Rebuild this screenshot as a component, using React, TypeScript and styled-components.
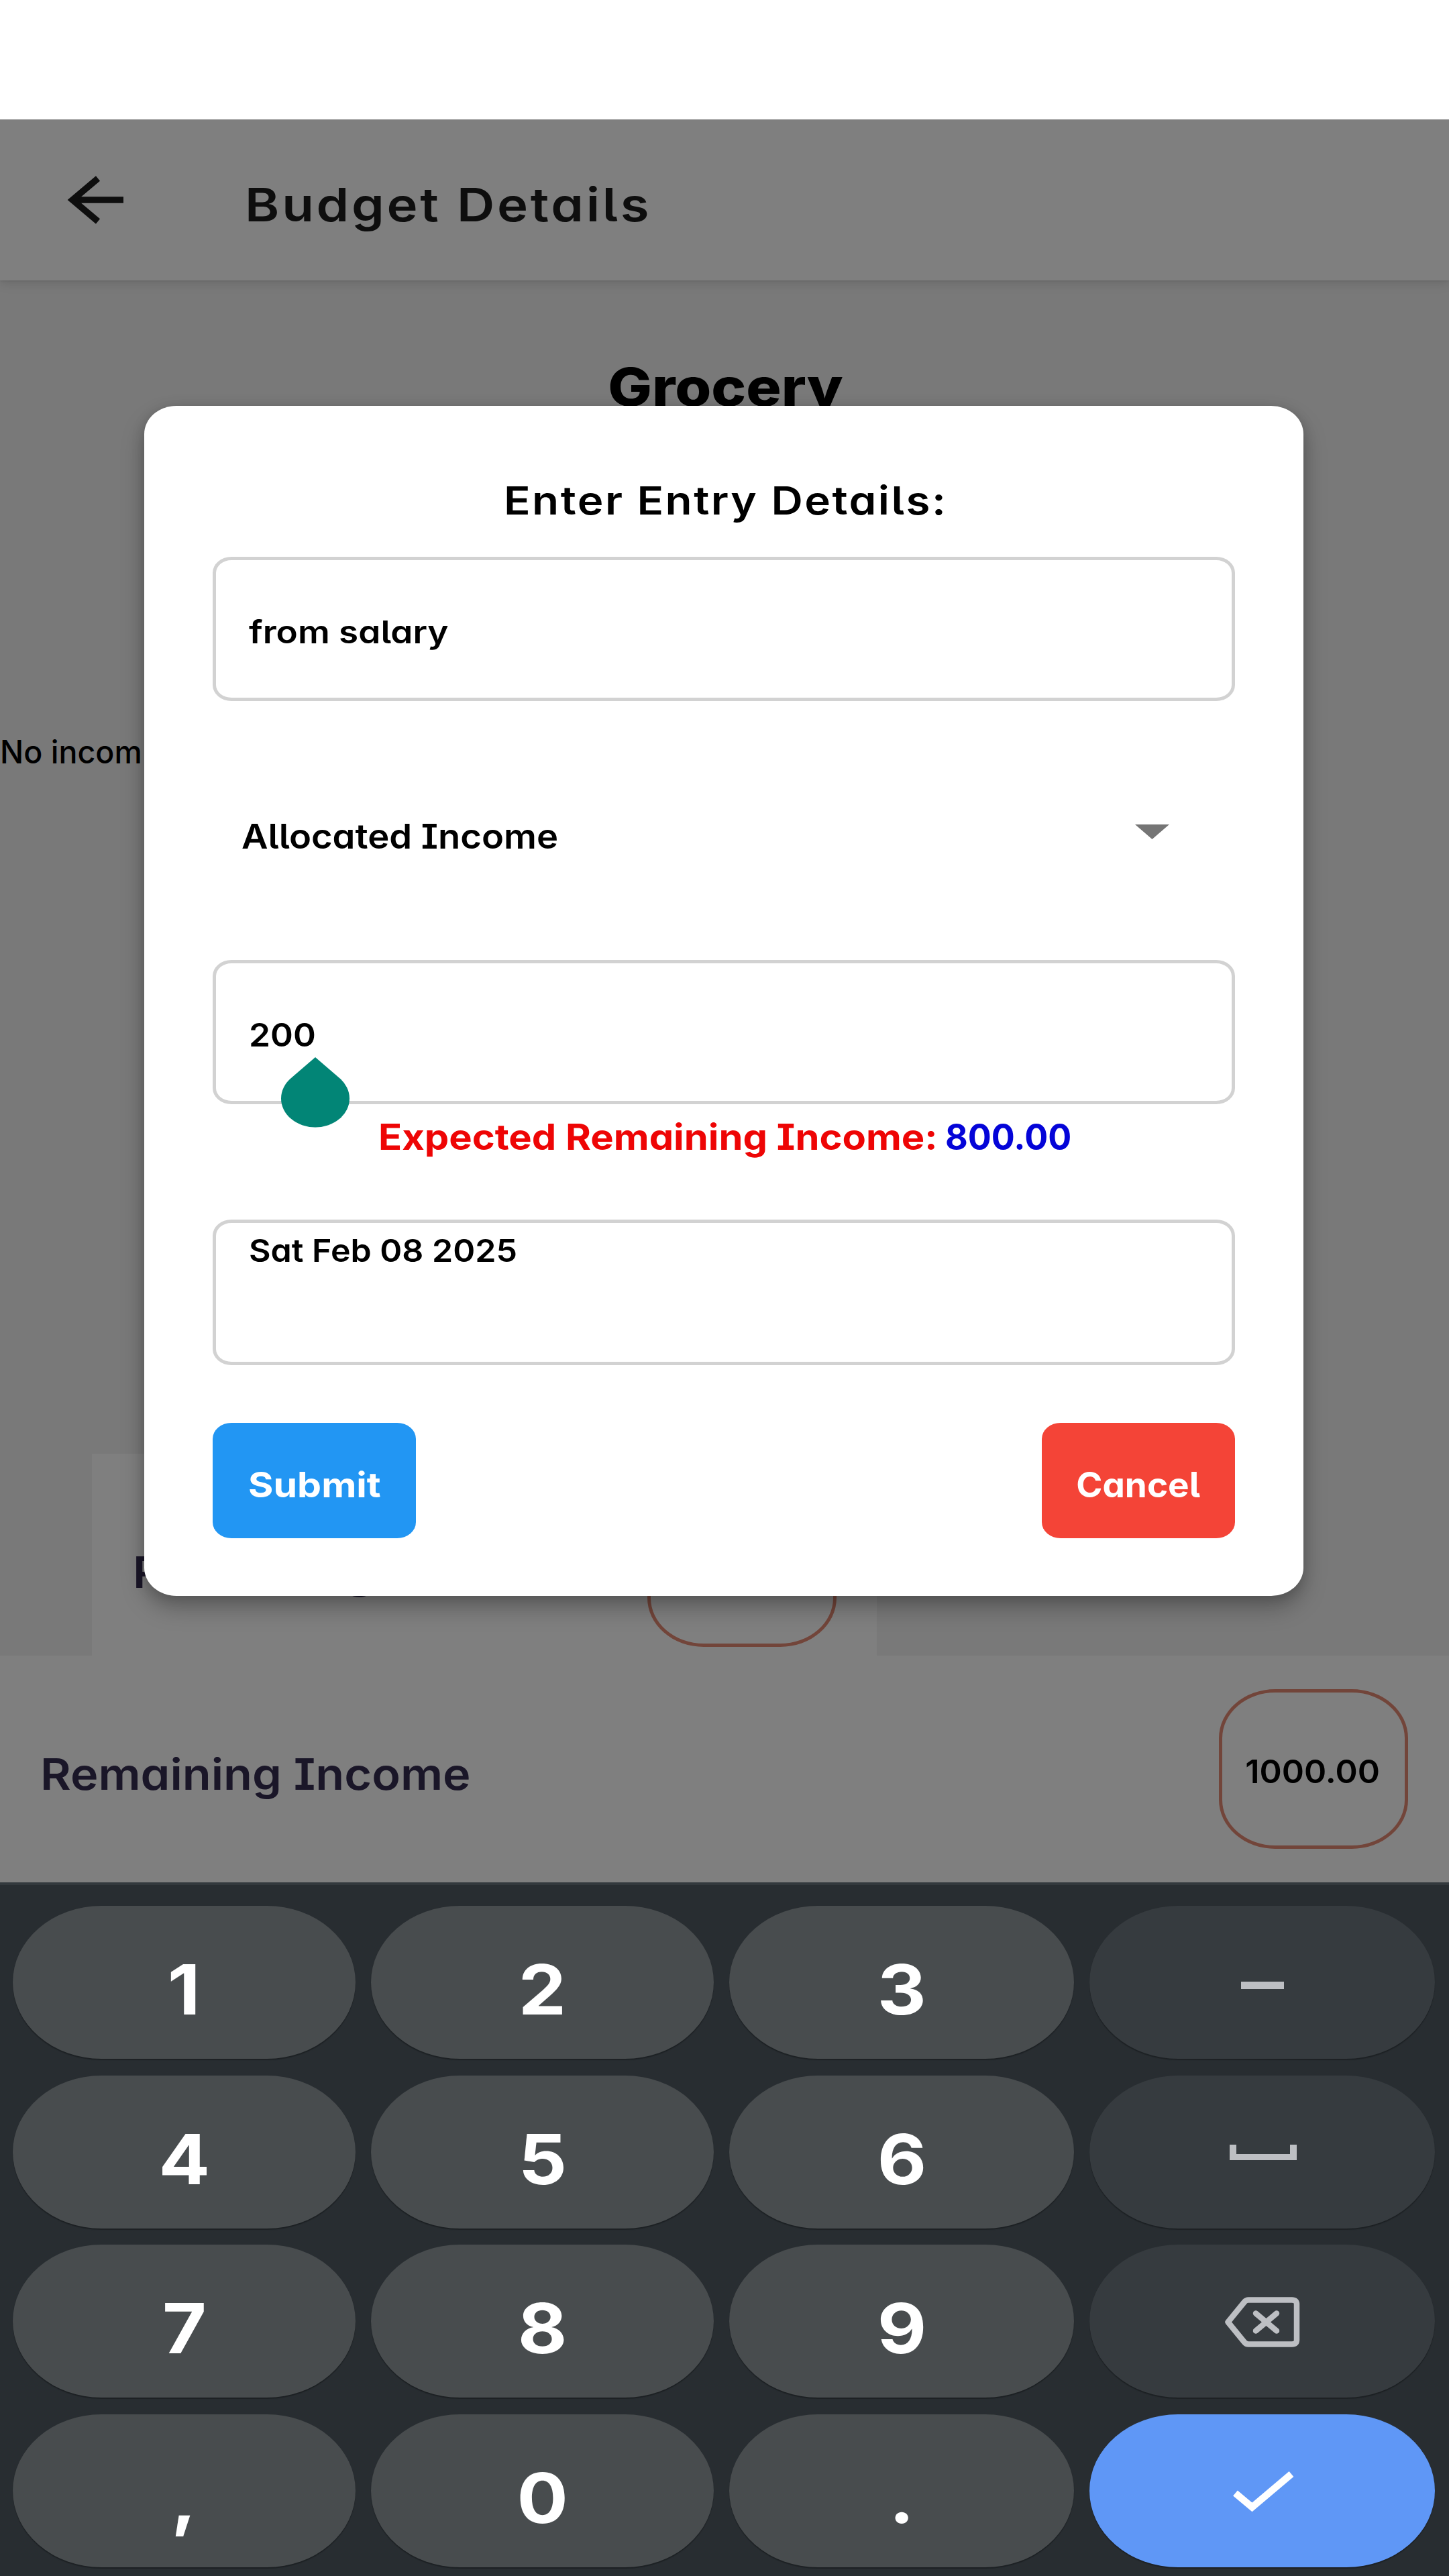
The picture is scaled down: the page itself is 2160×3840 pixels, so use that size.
import React from 'react';
import styled, { createGlobalStyle } from 'styled-components';

const GlobalStyle = createGlobalStyle`
  * { box-sizing: border-box; }
  body {
    margin: 0;
    background: #fff;
    font-family: Inter, "Noto Sans", sans-serif;
    font-feature-settings: "cv11", "cv08", "cv05";
  }
`;

const Screen = styled.div`
  width: 2160px;
  height: 3840px;
  display: flex;
  flex-direction: column;
  overflow: hidden;
  background: #fff;
`;

const StatusBar = styled.div`
  height: 178px;
  flex: none;
  background: #fff;
`;

const Viewport = styled.main`
  position: relative;
  height: 2628px;
  flex: none;
  display: flex;
  flex-direction: column;
  overflow: hidden;
  background: #f2f2f2;
`;

interface LabelProps {
  $size: number;
  $weight?: number;
  $color?: string;
  $stretch?: number;
  $tracking?: number;
  $line?: number;
  $origin?: string;
}

const Label = styled.span<LabelProps>`
  display: block;
  flex: none;
  white-space: nowrap;
  font-size: ${(p) => p.$size}px;
  font-weight: ${(p) => p.$weight ?? 500};
  color: ${(p) => p.$color ?? '#000'};
  letter-spacing: ${(p) => p.$tracking ?? 0}px;
  line-height: ${(p) => p.$line ?? 60}px;
  transform: scaleX(${(p) => p.$stretch ?? 1});
  transform-origin: ${(p) => p.$origin ?? 'left'} center;
`;

const Header = styled.header`
  position: relative;
  height: 240px;
  flex: none;
  display: flex;
  align-items: center;
  padding-left: 98px;
  background: #fff;
  box-shadow: 0 4px 16px rgba(0, 0, 0, 0.13), 0 1px 3px rgba(0, 0, 0, 0.08);
`;

const HeaderTitle = styled.div`
  margin: 14px 0 0 177px;
`;

const BudgetName = styled.div`
  display: flex;
  justify-content: center;
  margin-top: 109px;
  padding-left: 3px;
`;

const EmptyNote = styled.div`
  margin-top: 464px;
`;

const TotalRow = styled.div<{ $inset?: boolean }>`
  display: flex;
  flex: none;
  justify-content: space-between;
  align-items: flex-start;
  background: #fff;
  width: ${(p) => (p.$inset ? '1170px' : '100%')};
  height: ${(p) => (p.$inset ? 301 : 339)}px;
  margin: ${(p) => (p.$inset ? '1016px 0 0 137px' : '0')};
  padding: 50px ${(p) => (p.$inset ? 60 : 61)}px 0 ${(p) => (p.$inset ? 61 : 60)}px;
`;

const TotalName = styled.div`
  margin-top: 87px;
`;

const AmountBox = styled.div`
  width: 282px;
  height: 238px;
  border: 5px solid #e58b75;
  border-radius: 84px / 73px;
  display: flex;
  align-items: center;
  justify-content: center;
  padding: 7px 2px 0 0;
`;

const Backdrop = styled.div`
  position: absolute;
  inset: 0;
  display: flex;
  justify-content: center;
  align-items: flex-start;
  padding: 427px 2px 0 0;
  background: rgba(0, 0, 0, 0.5);
`;

const Dialog = styled.form`
  width: 1728px;
  height: 1774px;
  display: flex;
  flex-direction: column;
  padding: 100px 102px 0;
  border-radius: 48px / 42px;
  background: #fff;
  box-shadow: 0 18px 34px rgba(0, 0, 0, 0.26), 0 4px 20px rgba(0, 0, 0, 0.14);
`;

const DialogTitle = styled.div`
  display: flex;
  justify-content: center;
  padding-left: 5px;
`;

const Field = styled.div<{ $top: number; $height: number; $alignTop?: boolean }>`
  position: relative;
  flex: none;
  height: ${(p) => p.$height}px;
  margin-top: ${(p) => p.$top}px;
  display: flex;
  align-items: ${(p) => (p.$alignTop ? 'flex-start' : 'center')};
  padding: ${(p) => (p.$alignTop ? 11 : 8)}px 48px 0 49px;
  border: 5px solid #d2d2d2;
  border-radius: 28px / 24px;
`;

const CursorHandle = styled.svg`
  position: absolute;
  left: 96px;
  top: 138px;
  width: 104px;
  height: 108px;
`;

const Select = styled.div`
  height: 160px;
  flex: none;
  margin-top: 122px;
  display: flex;
  align-items: center;
  justify-content: space-between;
  padding: 0 98px 0 43px;
`;

const Caret = styled.svg`
  width: 51px;
  height: 22px;
  margin-top: -15px;
`;

const Expected = styled.div`
  display: flex;
  flex: none;
  margin-top: 19px;
  padding-left: 247px;
`;

const ExpectedName = styled.div`
  width: 845px;
`;

const Actions = styled.div`
  display: flex;
  flex: none;
  justify-content: space-between;
  margin-top: 86px;
`;

const ActionButton = styled.div<{ $bg: string; $width: number }>`
  width: ${(p) => p.$width}px;
  height: 172px;
  display: flex;
  align-items: center;
  justify-content: center;
  padding-top: 14px;
  border-radius: 28px / 24px;
  background: ${(p) => p.$bg};
`;

const Keyboard = styled.section`
  flex: none;
  height: 1034px;
  display: grid;
  grid-template-columns: 511px 511px 514px 515px;
  grid-auto-rows: 228px;
  column-gap: 23px;
  row-gap: 24.6px;
  padding: 31px 0 0 19px;
  border-top: 4px solid #33393d;
  background: #282d31;
`;

const keyColors = { digit: '#484c4e', tool: '#363b3f', enter: '#5f97f6' };

const Key = styled.div<{ $kind: keyof typeof keyColors }>`
  display: flex;
  align-items: center;
  justify-content: center;
  border-radius: 132px / 114px;
  background: ${(p) => keyColors[p.$kind]};
  box-shadow: 0 2px 1px #1d2124;
`;

const KeyFace = styled.div`
  padding-top: 22px;
`;

const KeyIcon = styled.svg`
  width: 130px;
  height: 100px;
  margin-top: -2px;
`;

const MinusIcon = () => (
  <KeyIcon viewBox="0 0 130 100">
    <rect x="33" y="50" width="64" height="11" fill="#bdbfc3" />
  </KeyIcon>
);

const SpaceIcon = () => (
  <KeyIcon viewBox="0 0 130 100" fill="none" stroke="#bdbfc3">
    <path d="M21 40V63" strokeWidth="10" />
    <path d="M111 40V63" strokeWidth="10" />
    <path d="M16 58.5H116" strokeWidth="9" />
  </KeyIcon>
);

const BackspaceIcon = () => (
  <KeyIcon viewBox="0 0 130 100" fill="none" stroke="#bdbfc3" strokeWidth="8.5" strokeLinejoin="round">
    <path d="M44 19.500H109Q116 19.500 116 26V79Q116 85.500 109 85.500H44Q40.500 85.500 38 82.500L13.500 52.500L38 22.500Q40.500 19.500 44 19.500Z" />
    <path d="M55 39.500L86 65.500M86 39.500L55 65.500" strokeLinecap="round" />
  </KeyIcon>
);

const CheckIcon = () => (
  <KeyIcon viewBox="0 0 130 100" fill="none" stroke="#fff" strokeWidth="10.500">
    <path d="M24.500 54.500L49.500 75.500L108 26" />
  </KeyIcon>
);

const BackArrow = styled.svg`
  width: 90px;
  height: 80px;
  flex: none;
`;

type KeyDef = { kind: keyof typeof keyColors; face: React.ReactNode };

const glyph = (text: string): KeyDef => ({
  kind: 'digit',
  face: (
    <KeyFace>
      <Label $size={103} $weight={700} $color="#fff" $stretch={1.1} $line={110} $origin="center">
        {text}
      </Label>
    </KeyFace>
  ),
});

const keys: KeyDef[] = [
  glyph('1'), glyph('2'), glyph('3'), { kind: 'tool', face: <MinusIcon /> },
  glyph('4'), glyph('5'), glyph('6'), { kind: 'tool', face: <SpaceIcon /> },
  glyph('7'), glyph('8'), glyph('9'), { kind: 'tool', face: <BackspaceIcon /> },
  glyph(','), glyph('0'), glyph('.'), { kind: 'enter', face: <CheckIcon /> },
];

function Total({ name, amount, inset }: { name: string; amount?: string; inset?: boolean }) {
  return (
    <TotalRow $inset={inset}>
      <TotalName>
        <Label $size={65} $weight={600} $color="#352d50" $stretch={1.08} $line={80}>{name}</Label>
      </TotalName>
      <AmountBox>
        {amount && (
          <Label $size={48} $weight={600} $stretch={1.05} $origin="center">{amount}</Label>
        )}
      </AmountBox>
    </TotalRow>
  );
}

export default function App() {
  return (
    <>
      <GlobalStyle />
      <Screen>
        <StatusBar />
        <Viewport>
          <Header>
            <BackArrow viewBox="0 0 90 80" fill="none" stroke="#1c1c1c" strokeWidth="9.500">
              <path d="M9 40H86" />
              <path d="M48 8L10 40L48 72" />
            </BackArrow>
            <HeaderTitle>
              <Label $size={69} $weight={600} $color="#1c1c1c" $stretch={1.13} $tracking={3.3} $line={90}>
                Budget Details
              </Label>
            </HeaderTitle>
          </Header>
          <BudgetName>
            <Label $size={78} $weight={800} $stretch={1.12} $line={100} $origin="center">Grocery</Label>
          </BudgetName>
          <EmptyNote>
            <Label $size={48} $weight={550} $stretch={0.97}>No incom</Label>
          </EmptyNote>
          <Total name="Remaining Income" inset />
          <Total name="Remaining Income" amount="1000.00" />

          <Backdrop>
            <Dialog>
              <DialogTitle>
                <Label $size={58} $weight={600} $stretch={1.13} $tracking={2.2} $line={82} $origin="center">
                  Enter Entry Details:
                </Label>
              </DialogTitle>
              <Field $top={43} $height={215}>
                <Label $size={47} $weight={600} $stretch={1.13}>from salary</Label>
              </Field>
              <Select>
                <Label $size={51} $weight={600} $stretch={1.065}>Allocated Income</Label>
                <Caret viewBox="0 0 51 22">
                  <path d="M0 0H51L25.500 22Z" fill="#757575" />
                </Caret>
              </Select>
              <Field $top={104} $height={215}>
                <Label $size={48} $weight={600} $stretch={1.07}>200</Label>
                <CursorHandle viewBox="0 0 104 108">
                  <path d="M52 2L88 33A51 43 0 1 1 16 33Z" fill="#028576" />
                </CursorHandle>
              </Field>
              <Expected>
                <ExpectedName>
                  <Label $size={53} $weight={700} $color="#ee0505" $stretch={1.092}>
                    Expected Remaining Income:
                  </Label>
                </ExpectedName>
                <Label $size={53} $weight={700} $color="#0404d8" $stretch={0.98}>800.00</Label>
              </Expected>
              <Field $top={93} $height={217} $alignTop>
                <Label $size={47} $weight={600} $stretch={1.065} $line={60}>Sat Feb 08 2025</Label>
              </Field>
              <Actions>
                <ActionButton $bg="#2296f3" $width={303}>
                  <Label $size={52} $weight={650} $color="#fff" $stretch={1.1} $origin="center">Submit</Label>
                </ActionButton>
                <ActionButton $bg="#f44437" $width={288}>
                  <Label $size={52} $weight={650} $color="#fff" $stretch={1.02} $origin="center">Cancel</Label>
                </ActionButton>
              </Actions>
            </Dialog>
          </Backdrop>
        </Viewport>
        <Keyboard>
          {keys.map((key, i) => (
            <Key key={i} $kind={key.kind}>{key.face}</Key>
          ))}
        </Keyboard>
      </Screen>
    </>
  );
}
